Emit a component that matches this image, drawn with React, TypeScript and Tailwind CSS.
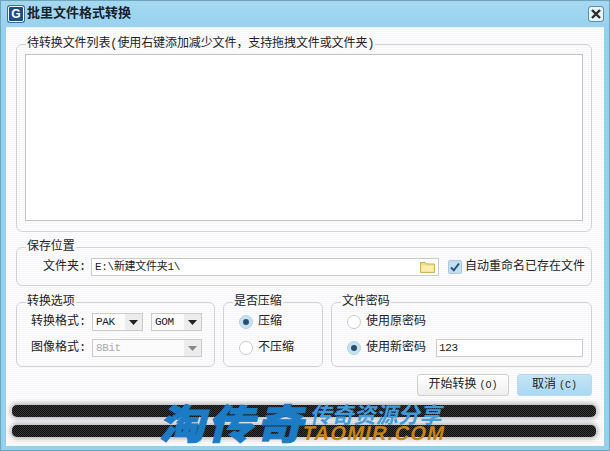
import React from "react";

const FONT = "[font-family:'Liberation_Mono','Noto_Sans_CJK_SC',monospace]";

function Group({ title, className, children }: { title: string; className: string; children: React.ReactNode }) {
  return (
    <fieldset className={`min-w-0 rounded-[6px] border border-[#d2d2d8] ${className}`}>
      <legend className="ml-[9px] h-[18px] px-px text-[12px] leading-[18px] tracking-[-0.1px] text-[#222]">{title}</legend>
      {children}
    </fieldset>
  );
}

function Arrow({ color = "#222" }: { color?: string }) {
  return (
    <svg width="9" height="5" viewBox="0 0 9 5">
      <path d="M0 0h9L4.5 5z" fill={color} />
    </svg>
  );
}

function Select({ value, className, disabled }: { value: string; className: string; disabled?: boolean }) {
  return (
    <div className={`flex h-[18px] items-center border border-[#cbcbcb] bg-[#fbfbfb] ${className}`}>
      <span className={`flex-1 pl-[3px] text-[11px] leading-[16px] tracking-[-0.4px] ${disabled ? "text-[#aaa]" : "text-[#222]"}`}>{value}</span>
      <span className="flex h-full w-[17px] items-center justify-center bg-[#ececec]">
        <Arrow color={disabled ? "#888" : "#222"} />
      </span>
    </div>
  );
}

function Radio({ checked }: { checked?: boolean }) {
  return (
    <span
      className={`flex h-[14px] w-[14px] shrink-0 items-center justify-center rounded-full border ${
        checked ? "border-[#b4d3e6] bg-[#c9e2f2]" : "border-[#c9c9c9] bg-white"
      }`}
    >
      {checked && <span className="h-[6px] w-[6px] rounded-full bg-[#26506e]" />}
    </span>
  );
}

function Bar() {
  return (
    <div className="h-[12px] rounded-[5px] bg-[#222] bg-[repeating-conic-gradient(#0c0c0c_0_25%,#3a3a3a_0_50%)] bg-[length:2px_2px] shadow-[0_0_4px_2px_rgba(110,110,110,0.45)]" />
  );
}

export default function App() {
  return (
    <div className={`flex h-[451px] w-[610px] flex-col overflow-hidden border border-[#6fa4bd] bg-[#96d0ec] ${FONT}`}>
      <div className="flex h-[26px] shrink-0 items-center bg-[linear-gradient(#a5d8f0,#98d2ee)] pl-[7px] pr-[5px]">
        <div className="flex h-[16px] w-[16px] items-center justify-center rounded-[2px] border border-white bg-[#1d4f86] shadow-[0_0_0_1px_#3d6c97]">
          <span className="text-[12px] font-bold leading-none text-white [font-family:'Liberation_Sans',sans-serif]">G</span>
        </div>
        <span className="ml-[3px] flex-1 text-[13px] font-bold text-[#16222c]">批里文件格式转换</span>
        <div className="flex h-[16px] w-[16px] items-center justify-center rounded-[3px] border border-[#5f8ba3] bg-[#e4f2fa]">
          <svg width="10" height="10" viewBox="0 0 10 10">
            <path d="M1 1l8 8M9 1l-8 8" stroke="#2b2b2b" strokeWidth="2.4" />
          </svg>
        </div>
      </div>

      <div className="mx-[5px] mb-[4px] flex flex-1 flex-col border-t border-[#e4f3fb] bg-[#fbfbfd] bg-[repeating-linear-gradient(#fdfdfe_0_1px,#f6f6f9_1px_2px)] pl-[10px] pr-[12px] pt-[7px]">
        <Group title="待转换文件列表(使用右键添加减少文件，支持拖拽文件或文件夹)" className="h-[197px]">
          <div className="mx-[8px] mt-px h-[167px] border border-[#c4c4c4] bg-white" />
        </Group>

        <Group title="保存位置" className="mt-[6px] h-[48px]">
          <div className="ml-[26px] mt-[2px] flex h-[18px] items-center">
            <span className="w-[48px] text-[12px] text-[#222]">文件夹:</span>
            <div className="flex h-[18px] w-[348px] items-center border border-[#cbcbcb] bg-white pl-[3px] pr-[3px]">
              <span className="flex-1 text-[11px] tracking-[-0.3px] text-[#222]">E:\新建文件夹1\</span>
              <svg width="15" height="12" viewBox="0 0 15 12">
                <path d="M0.5 1.5h5l1 1.5h8v8.5h-14z" fill="#f4dc85" stroke="#cfb356" />
                <path d="M1.5 4.5h12v6h-12z" fill="#fbeeb0" />
              </svg>
            </div>
            <span className="ml-[9px] flex h-[14px] w-[14px] items-center justify-center rounded-[2px] border border-[#a9c9de] bg-[#c4deef]">
              <svg width="10" height="10" viewBox="0 0 10 10">
                <path d="M1 5.5l2.8 2.8L9 1.5" stroke="#1e5680" strokeWidth="2" fill="none" />
              </svg>
            </span>
            <span className="ml-[3px] whitespace-nowrap text-[12px] text-[#222]">自动重命名已存在文件</span>
          </div>
        </Group>

        <div className="mt-[7px] flex h-[74px]">
          <Group title="转换选项" className="w-[199px]">
            <div className="mt-[2px] flex flex-col gap-[8px] pl-[14px]">
              <div className="flex items-center">
                <span className="w-[61px] text-[12px] leading-[18px] text-[#222]">转换格式:</span>
                <Select value="PAK" className="w-[51px]" />
                <Select value="GOM" className="ml-[8px] w-[51px]" />
              </div>
              <div className="flex items-center">
                <span className="w-[61px] text-[12px] leading-[18px] text-[#222]">图像格式:</span>
                <Select value="8Bit" className="w-[110px]" disabled />
              </div>
            </div>
          </Group>
          <Group title="是否压缩" className="ml-[8px] w-[100px]">
            <div className="mt-[2px] flex flex-col gap-[8px] pl-[15px] text-[12px] leading-[18px] text-[#222]">
              <div className="flex items-center gap-[5px]"><Radio checked />压缩</div>
              <div className="flex items-center gap-[5px]"><Radio />不压缩</div>
            </div>
          </Group>
          <Group title="文件密码" className="ml-[8px] flex-1">
            <div className="mt-[2px] flex flex-col gap-[8px] pl-[15px] text-[12px] leading-[18px] text-[#222]">
              <div className="flex items-center gap-[5px]"><Radio />使用原密码</div>
              <div className="flex items-center gap-[5px]">
                <Radio checked />
                使用新密码
                <div className="ml-[5px] h-[18px] w-[147px] border border-[#cbcbcb] bg-white pl-[2px] text-[11px] leading-[16px] tracking-[-0.4px]">123</div>
              </div>
            </div>
          </Group>
        </div>

        <div className="mt-[7px] flex h-[22px] justify-end gap-[8px]">
          <button className="h-[22px] w-[92px] rounded-[3px] border border-[#cfcfcf] bg-[linear-gradient(#ffffff,#eeeeee)] text-[12px] text-[#222]">开始转换<span className="ml-[3px] text-[10px]">(O)</span></button>
          <button className="h-[22px] w-[75px] rounded-[3px] border border-[#b7dbee] bg-[linear-gradient(#c5e5f6,#a8d8f1)] text-[12px] text-[#222]">取消<span className="ml-[3px] text-[10px]">(C)</span></button>
        </div>

        <div className="relative -ml-[4px] -mr-[4px] mt-[9px] flex flex-col gap-[8px]">
          <Bar />
          <Bar />
          <div className="absolute left-[151px] top-[-6px] flex h-[44px] items-center [font-family:'Noto_Sans_CJK_SC',sans-serif]">
            <span className="inline-block w-[149px] -skew-x-12 scale-y-[0.88] whitespace-nowrap text-[46px] font-black leading-[44px] tracking-[3px] text-[#1b7bc4] [-webkit-text-stroke:1px_#1b7bc4]">淘传奇</span>
            <div className="mt-[2px] flex flex-col">
              <span className="inline-block -skew-x-12 whitespace-nowrap text-[22px] font-bold leading-[22px] text-[#3f9bdc]">传奇资源分享</span>
              <span className="-ml-[9px] inline-block -skew-x-12 whitespace-nowrap text-[20px] font-bold leading-[18px] tracking-[1.3px] text-[#c9860f] [font-family:'Liberation_Sans',sans-serif]">TAOMIR.COM</span>
            </div>
          </div>
        </div>
      </div>
    </div>
  );
}
